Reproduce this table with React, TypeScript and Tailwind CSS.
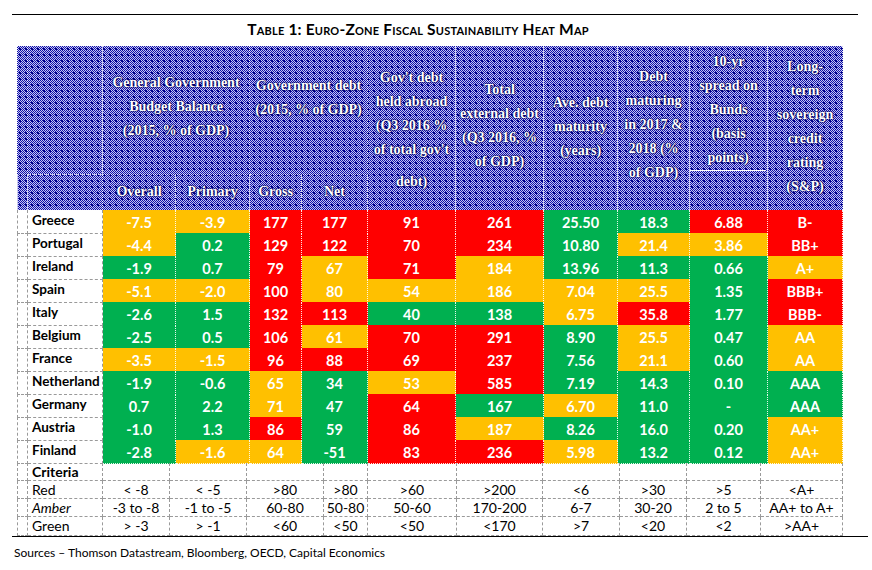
const A = "bg-[#ffc000]";
const G = "bg-[#00b050]";
const R = "bg-[#ff0000]";

type Cell = [string, string];

const rows: { name: string; cells: Cell[] }[] = [
  { name: "Greece", cells: [["-7.5", A], ["-3.9", A], ["177", R], ["177", R], ["91", R], ["261", R], ["25.50", G], ["18.3", G], ["6.88", R], ["B-", R]] },
  { name: "Portugal", cells: [["-4.4", A], ["0.2", G], ["129", R], ["122", R], ["70", R], ["234", R], ["10.80", G], ["21.4", A], ["3.86", A], ["BB+", R]] },
  { name: "Ireland", cells: [["-1.9", G], ["0.7", G], ["79", R], ["67", A], ["71", R], ["184", A], ["13.96", G], ["11.3", G], ["0.66", G], ["A+", A]] },
  { name: "Spain", cells: [["-5.1", A], ["-2.0", A], ["100", R], ["80", A], ["54", A], ["186", A], ["7.04", A], ["25.5", A], ["1.35", G], ["BBB+", R]] },
  { name: "Italy", cells: [["-2.6", G], ["1.5", G], ["132", R], ["113", R], ["40", G], ["138", G], ["6.75", A], ["35.8", R], ["1.77", G], ["BBB-", R]] },
  { name: "Belgium", cells: [["-2.5", G], ["0.5", G], ["106", R], ["61", A], ["70", R], ["291", R], ["8.90", G], ["25.5", A], ["0.47", G], ["AA", A]] },
  { name: "France", cells: [["-3.5", A], ["-1.5", A], ["96", R], ["88", R], ["69", R], ["237", R], ["7.56", G], ["21.1", A], ["0.60", G], ["AA", A]] },
  { name: "Netherland", cells: [["-1.9", G], ["-0.6", G], ["65", A], ["34", G], ["53", A], ["585", R], ["7.19", G], ["14.3", G], ["0.10", G], ["AAA", G]] },
  { name: "Germany", cells: [["0.7", G], ["2.2", G], ["71", A], ["47", G], ["64", R], ["167", G], ["6.70", A], ["11.0", G], ["-", G], ["AAA", G]] },
  { name: "Austria", cells: [["-1.0", G], ["1.3", G], ["86", R], ["59", G], ["86", R], ["187", A], ["8.26", G], ["16.0", G], ["0.20", G], ["AA+", A]] },
  { name: "Finland", cells: [["-2.8", G], ["-1.6", A], ["64", A], ["-51", G], ["83", R], ["236", R], ["5.98", A], ["13.2", G], ["0.12", G], ["AA+", A]] },
];

const criteria: { label: string; className: string; h: string; values: string[] }[] = [
  { label: "Criteria", className: "font-bold", h: "h-[18px]", values: ["", "", "", "", "", "", "", "", "", ""] },
  { label: "Red", className: "", h: "h-[18px]", values: ["< -8", "< -5", ">80", ">80", ">60", ">200", "<6", ">30", ">5", "<A+"] },
  { label: "Amber", className: "italic", h: "h-[18px]", values: ["-3 to -8", "-1 to -5", "60-80", "50-80", "50-60", "170-200", "6-7", "30-20", "2 to 5", "AA+ to A+"] },
  { label: "Green", className: "", h: "h-[19px]", values: ["> -3", "> -1", "<60", "<50", "<50", "<170", ">7", "<20", "<2", ">AA+"] },
];

const dataCols = "grid-cols-[11px_75px_73px_74px_52px_66px_88px_88px_74px_72px_78px_75px]";
const critCols = "grid-cols-[11px_75px_67px_77px_77px_44px_89px_86px_77px_67px_74px_82px]";

const hdr = "border-r border-dotted border-white/80";
const hdrText =
  "text-white font-bold text-center text-[14px] leading-[24px] [font-family:'Liberation_Serif',serif] [text-shadow:0_0_1px_#00005a,0_0_2px_#00005a,0_0_2px_#00005a]";

const HeaderCell = ({ lines, pt }: { lines: string[]; pt: string }) => (
  <div className={`row-span-2 ${hdr} ${pt} ${hdrText}`}>
    {lines.map((l) => (
      <div key={l}>{l}</div>
    ))}
  </div>
);

export default function App() {
  return (
    <div className="w-[872px] h-[570px] bg-white [font-family:Lato,'Open_Sans',sans-serif] text-black overflow-hidden">
      <div className="pt-[14px]">
        <div className="ml-[12px] w-[846px] border-t border-black"></div>
        <div className="h-[31px] flex items-center justify-center pr-[36px] pb-[2px] text-[15.5px] font-bold [font-variant:small-caps] tracking-[0.2px]">
          Table 1: Euro-Zone Fiscal Sustainability Heat Map
        </div>
      </div>

      <div className="ml-[17px] w-[826px]">
        {/* Header */}
        <div
          className={`grid ${dataCols} grid-rows-[129px_35px] bg-[#1010a8] [background-image:radial-gradient(circle,#000088_0.9px,transparent_1.2px),repeating-conic-gradient(#1010a8_0%_25%,#c4c4f2_0%_50%)] [background-size:6px_6px,2px_2px]`}
        >
          <div className={`${hdr} border-l border-b`}></div>
          <div className={`${hdr} border-b`}></div>
          <div className={`col-span-2 ${hdr} border-b pt-[25px] ${hdrText}`}>
            <div>General Government</div>
            <div>Budget Balance</div>
            <div>(2015, % of GDP)</div>
          </div>
          <div className={`col-span-2 ${hdr} border-b pt-[28px] ${hdrText}`}>
            <div>Government debt</div>
            <div>(2015, % of GDP)</div>
          </div>
          <div className={`row-span-2 ${hdr} pt-[20px] ${hdrText}`}>
            <div>Gov't debt</div>
            <div>held abroad</div>
            <div>(Q3 2016 %</div>
            <div>of total gov't</div>
            <div className="mt-[8px]">debt)</div>
          </div>
          <HeaderCell lines={["Total", "external debt", "(Q3 2016, %", "of GDP)"]} pt="pt-[32px]" />
          <HeaderCell lines={["Ave. debt", "maturity", "(years)"]} pt="pt-[45px]" />
          <HeaderCell lines={["Debt", "maturing", "in 2017 &", "2018 (%", "of GDP)"]} pt="pt-[19px]" />
          <div className={`row-span-2 ${hdr} pt-[4px] ${hdrText}`}>
            <div>10-yr</div>
            <div>spread on</div>
            <div>Bunds</div>
            <div>(basis</div>
            <div className="border-b border-white w-[76px]">points)</div>
          </div>
          <HeaderCell lines={["Long-", "term", "sovereign", "credit", "rating", "(S&P)"]} pt="pt-[9px]" />

          <div className={`${hdr} border-l`}></div>
          <div className={hdr}></div>
          {["Overall", "Primary", "Gross", "Net"].map((t) => (
            <div key={t} className={`${hdr} ${hdrText} flex items-center justify-center pb-[2px]`}>
              {t}
            </div>
          ))}
        </div>

        {/* Data rows */}
        {rows.map((r) => (
          <div key={r.name} className={`grid ${dataCols} h-[23px]`}>
            <div className="border-l border-r border-b border-dashed border-[#9a9a9a]"></div>
            <div className="border-r border-b border-dashed border-[#9a9a9a] pl-[4px] text-[13.5px] leading-[20px] font-bold whitespace-nowrap overflow-hidden">
              {r.name}
            </div>
            {r.cells.map(([v, c], i) => (
              <div
                key={i}
                className={`${c} border-r border-b border-dotted border-white/90 text-white font-bold text-center text-[14.5px] leading-[20px] pt-[3px]`}
              >
                {v}
              </div>
            ))}
          </div>
        ))}

        {/* Criteria */}
        {criteria.map((c) => (
          <div key={c.label} className={`grid ${critCols} ${c.h} text-[14px] leading-[17px]`}>
            <div className="border-l border-r border-b border-dashed border-[#9a9a9a]"></div>
            <div className={`border-r border-b border-dashed border-[#9a9a9a] pl-[4px] ${c.className}`}>{c.label}</div>
            {c.values.map((v, i) => (
              <div key={i} className="border-r border-b border-dashed border-[#9a9a9a] text-center">
                {v}
              </div>
            ))}
          </div>
        ))}
      </div>

      <div className="ml-[12px] w-[856px] border-t border-black"></div>
      <div className="pl-[14px] pt-[8px] text-[12px] leading-[16px]">
        Sources – Thomson Datastream, Bloomberg, OECD, Capital Economics
      </div>
    </div>
  );
}
